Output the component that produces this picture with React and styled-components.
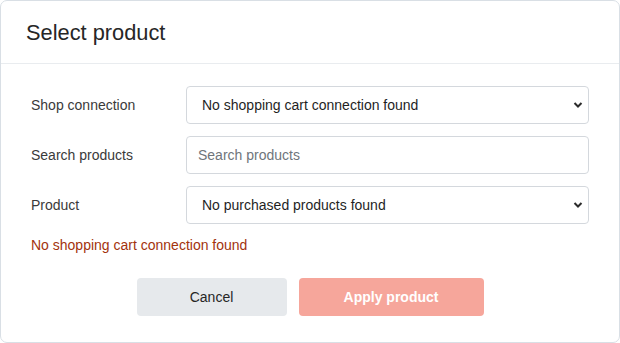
import React, { useState } from "react";
import styled, { createGlobalStyle } from "styled-components";

const GlobalStyle = createGlobalStyle`
  html, body {
    margin: 0;
    padding: 0;
    background: #ffffff;
  }
  body {
    font-family: "Liberation Sans", Arial, sans-serif;
  }
  * {
    box-sizing: border-box;
  }
`;

const Modal = styled.div`
  width: 620px;
  height: 343px;
  background: #ffffff;
  border: 1px solid #d9dfe5;
  border-radius: 7px;
  display: flex;
  flex-direction: column;
  overflow: hidden;
`;

const Header = styled.div`
  height: 63px;
  padding: 0 25px;
  display: flex;
  align-items: center;
  border-bottom: 1px solid #e9ecef;
`;

const Title = styled.h2`
  margin: 0;
  font-size: 21.8px;
  font-weight: 400;
  color: #262626;
  padding-top: 1px;
`;

const Body = styled.div`
  padding: 22px 30px 0 30px;
  display: flex;
  flex-direction: column;
`;

const Row = styled.div`
  display: grid;
  grid-template-columns: 155px 1fr;
  align-items: center;
  margin-bottom: 12px;
`;

const Label = styled.label`
  font-size: 14px;
  color: #3a3a3a;
`;

const SelectWrap = styled.div`
  position: relative;
`;

const Select = styled.select`
  width: 100%;
  height: 38px;
  appearance: none;
  -webkit-appearance: none;
  border: 1px solid #d4d8dd;
  border-radius: 4px;
  background: #ffffff;
  padding: 0 30px 0 15px;
  font-family: inherit;
  font-size: 14px;
  color: #1f1f1f;
  outline: none;
`;

const Chevron = styled.svg`
  position: absolute;
  right: 6px;
  top: 15px;
  pointer-events: none;
`;

const Input = styled.input`
  width: 100%;
  height: 38px;
  border: 1px solid #d4d8dd;
  border-radius: 4px;
  padding: 0 11px;
  font-family: inherit;
  font-size: 14px;
  color: #1f1f1f;
  outline: none;

  &::placeholder {
    color: #6f757b;
  }
`;

const ErrorText = styled.p`
  margin: -1px 0 0 0;
  font-size: 14px;
  line-height: 20px;
  color: #a3330d;
`;

const Footer = styled.div`
  display: flex;
  justify-content: center;
  gap: 12px;
  margin-top: 23px;
`;

const Button = styled.button`
  height: 38px;
  width: ${(p) => p.$width}px;
  border: none;
  border-radius: 4px;
  font-family: inherit;
  font-size: 14px;
  font-weight: ${(p) => (p.$primary ? 700 : 400)};
  color: ${(p) => (p.$primary ? "#ffffff" : "#262626")};
  background: ${(p) => (p.$primary ? "#f6a69b" : "#e6e9ec")};
  cursor: pointer;

  &:disabled {
    cursor: not-allowed;
  }
`;

function SelectField({ value, options }) {
  return (
    <SelectWrap>
      <Select defaultValue={value}>
        {options.map((o) => (
          <option key={o}>{o}</option>
        ))}
      </Select>
      <Chevron width="10" height="8" viewBox="0 0 10 8">
        <path d="M1.5 2 L5 5.5 L8.5 2" fill="none" stroke="#2b2b2b" strokeWidth="2" />
      </Chevron>
    </SelectWrap>
  );
}

export default function App() {
  const [search, setSearch] = useState("");

  return (
    <>
      <GlobalStyle />
      <Modal>
        <Header>
          <Title>Select product</Title>
        </Header>
        <Body>
          <Row>
            <Label>Shop connection</Label>
            <SelectField
              value="No shopping cart connection found"
              options={["No shopping cart connection found"]}
            />
          </Row>
          <Row>
            <Label>Search products</Label>
            <Input
              placeholder="Search products"
              value={search}
              onChange={(e) => setSearch(e.target.value)}
            />
          </Row>
          <Row>
            <Label>Product</Label>
            <SelectField
              value="No purchased products found"
              options={["No purchased products found"]}
            />
          </Row>
          <ErrorText>No shopping cart connection found</ErrorText>
          <Footer>
            <Button $width={150}>Cancel</Button>
            <Button $width={185} $primary disabled>
              Apply product
            </Button>
          </Footer>
        </Body>
      </Modal>
    </>
  );
}
